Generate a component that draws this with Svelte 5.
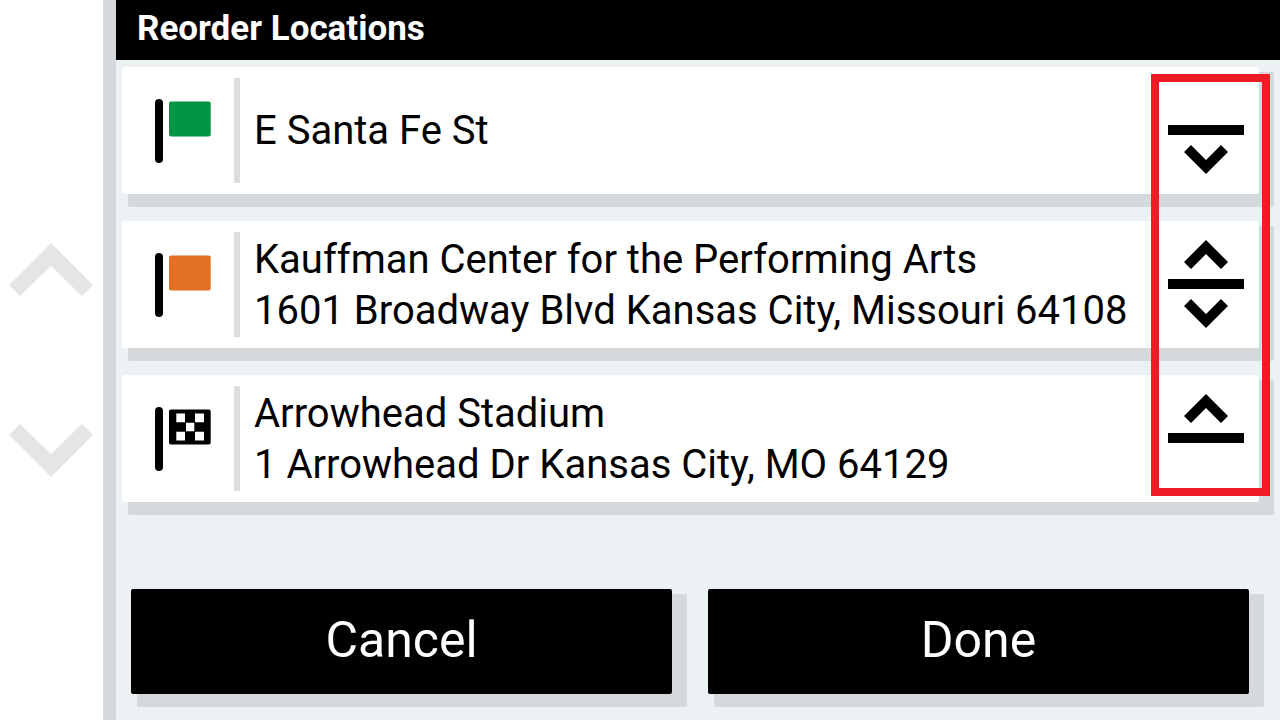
<script lang="ts">
    type Stop = { flag: string; lines: string[] };

    let stops: Stop[] = [
        { flag: "green", lines: ["E Santa Fe St"] },
        { flag: "orange", lines: ["Kauffman Center for the Performing Arts", "1601 Broadway Blvd Kansas City, Missouri 64108"] },
        { flag: "checkered", lines: ["Arrowhead Stadium", "1 Arrowhead Dr Kansas City, MO 64129"] },
    ];

    // flags belong to the position in the route, so only the text is swapped
    function move(from: number, to: number) {
        const lines = stops[from].lines;
        stops[from].lines = stops[to].lines;
        stops[to].lines = lines;
        stops = stops;
    }
</script>

<div class="screen">
    <nav>
        <button aria-label="Scroll up">
            <svg width="84" height="53" viewBox="0 0 84 53"><path d="M42 0 84 42 73 53 42 23 11 53 0 42Z" /></svg>
        </button>
        <button aria-label="Scroll down">
            <svg width="84" height="53" viewBox="0 0 84 53"><path d="M42 53 84 11 73 0 42 30 11 0 0 11Z" /></svg>
        </button>
    </nav>

    <main>
        <h1>Reorder Locations</h1>

        <div class="list">
            <ol>
                {#each stops as { flag, lines }, i}
                    <li>
                        <svg class="flag {flag}" width="56" height="65" viewBox="0 0 56 65">
                            <rect y="1" width="8" height="64" rx="4" />
                            <rect class="cloth" x="14" y="3.5" width="41.7" height="35" rx="2" />
                            {#if flag === "checkered"}
                                <path class="checks" d="M21.3 7.5h8.7v8.7h-8.7zM40 7.5h9v8.7h-9zM31 16.8h8.3v8.4h-8.3zM21.3 25.8h8.7v8.7h-8.7zM40 25.8h9v8.7h-9z" />
                            {/if}
                        </svg>
                        <div class="text">
                            {#each lines as line}
                                <p>{line}</p>
                            {/each}
                        </div>
                        <div class="order">
                            {#if i > 0}
                                <button class="up" aria-label="Move {lines[0]} up" on:click={() => move(i, i - 1)}>
                                    <svg width="44" height="29" viewBox="0 0 44 29"><path d="M22 0 44 22 37 29 22 14 7 29 0 22Z" /></svg>
                                </button>
                            {/if}
                            <span class="bar"></span>
                            {#if i < stops.length - 1}
                                <button class="down" aria-label="Move {lines[0]} down" on:click={() => move(i, i + 1)}>
                                    <svg width="44" height="29" viewBox="0 0 44 29"><path d="M22 29 44 7 37 0 22 15 7 0 0 7Z" /></svg>
                                </button>
                            {/if}
                        </div>
                    </li>
                {/each}
            </ol>
            <div class="highlight"></div>
        </div>

        <footer>
            <button>Cancel</button>
            <button>Done</button>
        </footer>
    </main>
</div>

<style>
    :global(body) {
        margin: 0;
    }

    .screen {
        --shadow: 6px 13px #d5d9dc, 15px 5px #d5d9dc, 15px 13px #d5d9dc;
        display: flex;
        min-height: 100vh;
        background-color: #ecf1f4;
        color: black;
        font-family: Roboto, sans-serif;
    }

    button {
        padding: 0;
        border: none;
        background: none;
        color: inherit;
        font: inherit;
        cursor: pointer;
    }

    svg {
        display: block;
    }

    nav {
        display: flex;
        flex-direction: column;
        align-items: flex-start;
        justify-content: center;
        gap: 128px;
        padding: 0 10px 0 9px;
        flex-shrink: 0;
        border-right: 13px solid #d5d9dc;
        background-color: white;
    }

    nav path {
        fill: #e5e5e5;
    }

    main {
        display: flex;
        flex-direction: column;
        flex: 1;
        min-width: 0;
    }

    h1 {
        margin: 0;
        padding: 0 21px 2px;
        background-color: black;
        color: white;
        font-size: 35px;
        font-weight: bold;
        line-height: 58px;
    }

    .list {
        position: relative;
        padding: 7px 21px 0 6px;
    }

    ol {
        display: flex;
        flex-direction: column;
        gap: 27px;
        margin: 0;
        padding: 0;
        list-style: none;
    }

    li {
        display: flex;
        align-items: center;
        min-height: 127px;
        border-radius: 2px;
        background-color: white;
        box-shadow: var(--shadow);
    }

    .flag {
        margin: 0 23px 0 33px;
        flex-shrink: 0;
    }

    .green .cloth {
        fill: #009444;
    }

    .orange .cloth {
        fill: #e17124;
    }

    .checks {
        fill: white;
    }

    .text {
        display: flex;
        flex-direction: column;
        justify-content: center;
        flex: 1;
        min-width: 0;
        min-height: 105px;
        padding-left: 14px;
        border-left: 6px solid #ddd;
        font-size: 40px;
        line-height: 51px;
    }

    p {
        margin: 0;
    }

    .order {
        display: grid;
        grid-template-rows: 58px 10px 58px;
        width: 76px;
        margin: 0 15px 1px 0;
        flex-shrink: 0;
    }

    .order button {
        display: flex;
        justify-content: center;
    }

    .up {
        grid-row: 1;
        align-items: flex-end;
        padding-bottom: 10px;
    }

    .bar {
        grid-row: 2;
        background-color: black;
    }

    .down {
        grid-row: 3;
        align-items: flex-start;
        padding-top: 10px;
    }

    /* callout around the reorder arrows */
    .highlight {
        position: absolute;
        top: 14px;
        right: 10px;
        bottom: 6px;
        width: 103px;
        border: 8px solid #ee1c25;
        pointer-events: none;
    }

    footer {
        display: grid;
        grid-template-columns: 1fr 1fr;
        gap: 36px;
        margin-top: auto;
        padding: 26px 31px 26px 15px;
    }

    footer button {
        height: 105px;
        padding-bottom: 4px;
        border-radius: 2px;
        background-color: black;
        box-shadow: var(--shadow);
        color: white;
        font-size: 50px;
    }
</style>
